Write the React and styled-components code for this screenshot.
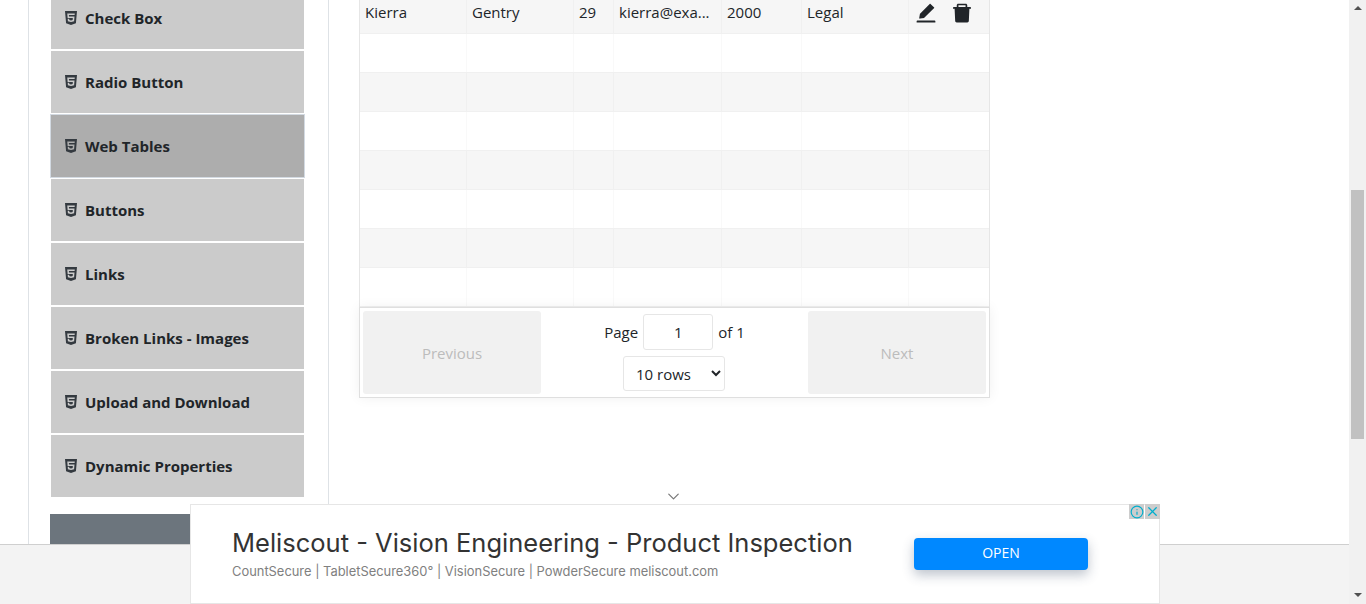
import React from 'react'
import styled, { createGlobalStyle } from 'styled-components'
import { FaHtml5 } from 'react-icons/fa'
import { AiFillEdit, AiFillDelete } from 'react-icons/ai'
import { ChevronDown, Info, X } from 'lucide-react'

const GlobalStyle = createGlobalStyle`
  html, body {
    margin: 0;
    padding: 0;
    height: 604px;
    overflow: hidden;
    background: #fff;
  }
  * {
    box-sizing: border-box;
  }
`

const menuItems = [
  'Check Box',
  'Radio Button',
  'Web Tables',
  'Buttons',
  'Links',
  'Broken Links - Images',
  'Upload and Download',
  'Dynamic Properties',
]

const columns = '107px 107px 40px 108px 80px 107px 1fr'
const emptyRows = [1, 2, 3, 4, 5, 6, 7]

const App = () => {
  return (
    <Page>
      <GlobalStyle />
      <Main>
        <Sidebar>
          <MenuList>
            {menuItems.map(item => (
              <MenuItem key={item} $active={item === 'Web Tables'}>
                <FaHtml5 size={16} />
                <MenuText>{item}</MenuText>
              </MenuItem>
            ))}
          </MenuList>
          <GroupHeader />
        </Sidebar>
        <Content>
          <TableBox>
            <Row $striped>
              <Cell>Kierra</Cell>
              <Cell>Gentry</Cell>
              <Cell>29</Cell>
              <Cell>kierra@exa...</Cell>
              <Cell>2000</Cell>
              <Cell>Legal</Cell>
              <ActionCell>
                <AiFillEdit size={24} />
                <AiFillDelete size={24} />
              </ActionCell>
            </Row>
            {emptyRows.map(n => (
              <Row key={n} $striped={n % 2 === 0}>
                <Cell />
                <Cell />
                <Cell />
                <Cell />
                <Cell />
                <Cell />
                <Cell />
              </Row>
            ))}
          </TableBox>
          <Pagination>
            <PageButton disabled>Previous</PageButton>
            <PageCenter>
              <PageInfo>
                Page
                <PageInput defaultValue="1" />
                of 1
              </PageInfo>
              <RowsSelect defaultValue="10">
                <option value="10">10 rows</option>
                <option value="20">20 rows</option>
              </RowsSelect>
            </PageCenter>
            <PageButton disabled>Next</PageButton>
          </Pagination>
        </Content>
        <FooterBar />
        <AdChevron>
          <ChevronDown size={19} strokeWidth={1.5} />
        </AdChevron>
        <AdBanner>
          <AdControls>
            <AdControl>
              <Info size={14} />
            </AdControl>
            <AdControl>
              <X size={15} />
            </AdControl>
          </AdControls>
          <AdCopy>
            <AdTitle>Meliscout - Vision Engineering - Product Inspection</AdTitle>
            <AdSub>CountSecure | TabletSecure360° | VisionSecure | PowderSecure meliscout.com</AdSub>
          </AdCopy>
          <AdButton>OPEN</AdButton>
        </AdBanner>
      </Main>
      <Scrollbar>
        <ArrowUp />
        <Track>
          <Thumb />
        </Track>
        <ArrowDown />
      </Scrollbar>
    </Page>
  )
}

const Page = styled.div`
  display: flex;
  width: 1366px;
  height: 604px;
  overflow: hidden;
  font-family: 'Open Sans', 'Noto Sans', sans-serif;
  color: #212529;
`
const Main = styled.div`
  position: relative;
  display: flex;
  align-items: flex-start;
  flex: 1;
  height: 604px;
  padding-left: 28px;
  overflow: hidden;
`
const Sidebar = styled.aside`
  width: 301px;
  height: 604px;
  flex-shrink: 0;
  padding-left: 21px;
  border-left: 1px solid #dee2e6;
  border-right: 1px solid #dee2e6;
`
const MenuList = styled.ul`
  list-style: none;
  margin: -14px 0 0;
  padding: 0;
  width: 255px;
`
const MenuItem = styled.li`
  display: flex;
  align-items: center;
  gap: 6px;
  height: 64px;
  padding: 0 12px 1px;
  background: ${p => (p.$active ? '#adadad' : '#cbcbcb')};
  border: 1px solid;
  border-color: ${p => (p.$active ? '#d3dae2' : '#fff')};
  svg {
    color: #343a40;
    flex-shrink: 0;
  }
`
const MenuText = styled.span`
  font-size: 15px;
  font-weight: 700;
  line-height: 20px;
`
const GroupHeader = styled.div`
  margin-top: 16px;
  width: 255px;
  height: 40px;
  background: #6c757d;
`
const Content = styled.main`
  padding-left: 30px;
  width: 661px;
`
const TableBox = styled.div`
  width: 631px;
  height: 307px;
  border-left: 1px solid #e6e6e6;
  border-right: 1px solid #e6e6e6;
  overflow: hidden;
`
const Row = styled.div`
  display: grid;
  grid-template-columns: ${columns};
  height: 39px;
  background: ${p => (p.$striped ? '#f6f6f6' : '#fff')};
  border-bottom: 1px solid #f0f0f0;
  &:first-child {
    height: 34px;
  }
`
const Cell = styled.div`
  padding: 0 5px;
  font-size: 15px;
  line-height: 24px;
  border-right: 1px solid rgba(0, 0, 0, 0.025);
  white-space: nowrap;
  overflow: hidden;
  &:last-child {
    border-right: none;
  }
`
const ActionCell = styled(Cell)`
  display: flex;
  gap: 12px;
  padding: 1px 0 0 5px;
  svg {
    color: #212529;
    flex-shrink: 0;
  }
`
const Pagination = styled.div`
  display: flex;
  justify-content: space-between;
  width: 631px;
  height: 91px;
  padding: 3px;
  background: #fff;
  border: 1px solid #dfdfdf;
  box-shadow: 0 0 12px rgba(0, 0, 0, 0.06);
`
const PageButton = styled.button`
  width: 178px;
  height: 83px;
  border: none;
  border-radius: 3px;
  background: #f1f1f1;
  color: #bcbcbc;
  font-family: inherit;
  font-size: 15px;
`
const PageCenter = styled.div`
  display: flex;
  flex-direction: column;
  align-items: center;
  gap: 6px;
  padding-top: 3px;
`
const PageInfo = styled.div`
  display: flex;
  align-items: center;
  gap: 5px;
  font-size: 15px;
`
const PageInput = styled.input`
  width: 70px;
  height: 36px;
  border: 1px solid #e6e6e6;
  border-radius: 3px;
  text-align: center;
  font-family: inherit;
  font-size: 15px;
  color: #212529;
`
const RowsSelect = styled.select`
  width: 102px;
  height: 35px;
  margin-right: 1px;
  padding-left: 8px;
  border: 1px solid #e6e6e6;
  border-radius: 3px;
  background: #fff;
  font-family: inherit;
  font-size: 15px;
  color: #212529;
`
const FooterBar = styled.div`
  position: absolute;
  left: 0;
  right: 0;
  bottom: 0;
  height: 60px;
  background: #f3f3f3;
  border-top: 1px solid #cfcfcf;
`
const AdChevron = styled.div`
  position: absolute;
  left: 664px;
  top: 487px;
  color: #777;
  line-height: 0;
`
const AdBanner = styled.div`
  position: absolute;
  left: 190px;
  top: 504px;
  display: flex;
  align-items: flex-start;
  width: 970px;
  height: 100px;
  padding: 0 0 0 41px;
  background: #fff;
  border: 1px solid #e6e6e6;
`
const AdControls = styled.div`
  position: absolute;
  top: -1px;
  right: -1px;
  display: flex;
  gap: 1px;
`
const AdControl = styled.span`
  display: flex;
  align-items: center;
  justify-content: center;
  width: 15px;
  height: 15px;
  background: #cdcdcd;
  color: #00aecd;
`
const AdCopy = styled.div`
  width: 682px;
  padding-top: 22px;
`
const AdTitle = styled.div`
  font-family: Inter, 'Noto Sans', sans-serif;
  font-size: 25.5px;
  line-height: 32px;
  color: #333;
  white-space: nowrap;
`
const AdSub = styled.div`
  margin-top: 3px;
  font-family: Inter, 'Noto Sans', sans-serif;
  font-size: 12.9px;
  line-height: 20px;
  color: #808080;
  white-space: nowrap;
`
const AdButton = styled.button`
  margin-top: 33px;
  width: 174px;
  height: 32px;
  padding: 0 0 3px;
  border: none;
  border-radius: 4px;
  background: #0088ff;
  color: #fff;
  font-family: 'Open Sans', sans-serif;
  font-size: 14px;
  box-shadow: 0 5px 12px rgba(40, 60, 90, 0.3);
`
const Scrollbar = styled.div`
  display: flex;
  flex-direction: column;
  align-items: center;
  width: 17px;
  height: 604px;
  background: #f1f1f1;
`
const ArrowUp = styled.div`
  margin-top: 6px;
  width: 0;
  height: 0;
  border-left: 4px solid transparent;
  border-right: 4px solid transparent;
  border-bottom: 4px solid #505050;
`
const ArrowDown = styled.div`
  margin-bottom: 7px;
  width: 0;
  height: 0;
  border-left: 4px solid transparent;
  border-right: 4px solid transparent;
  border-top: 4px solid #505050;
`
const Track = styled.div`
  flex: 1;
  width: 100%;
  padding: 180px 2px 0;
`
const Thumb = styled.div`
  width: 13px;
  height: 249px;
  background: #c1c1c1;
`

export default App
